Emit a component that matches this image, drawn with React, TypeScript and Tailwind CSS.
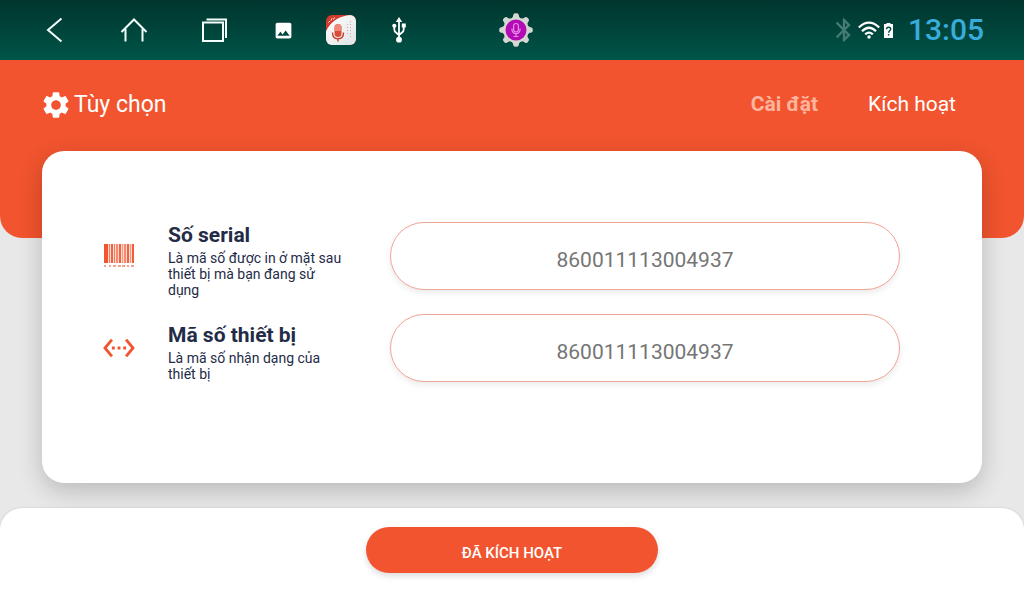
import React from "react";
import { MdBluetooth, MdImage, MdSettings, MdSettingsEthernet } from "react-icons/md";

const BARS = [
  [0, 4, 1], [5, 1, 0.7], [7, 2, 0.9], [10, 1, 0.7], [12, 2, 0.6], [15, 2, 0.9], [18, 1, 0.5],
  [20, 2, 0.6], [23, 2, 0.9], [26, 1, 0.5], [28, 2, 0.95],
];

function BarcodeIcon() {
  return (
    <svg viewBox="0 0 30 24" className="h-6 w-[30px]" fill="#f1552f" aria-hidden="true">
      <rect width="30" height="19" opacity="0.2" />
      {BARS.map(([x, w, o]) => (
        <rect key={x} x={x} y="0" width={w} height="19" opacity={o} />
      ))}
      {[[0, 2], [5, 2], [9, 3], [14, 3], [18, 3], [23, 2], [27, 3]].map(([x, w]) => (
        <rect key={x} x={x} y="21" width={w} height="2" opacity="0.55" />
      ))}
    </svg>
  );
}

function MicAppIcon() {
  return (
    <svg viewBox="0 0 30 30" className="size-[30px]" aria-hidden="true">
      <defs>
        <clipPath id="app-shape"><rect width="30" height="30" rx="6" /></clipPath>
        <linearGradient id="app-fill" x1="0" y1="0" x2="1" y2="1">
          <stop offset="0" stopColor="#ffffff" /><stop offset="1" stopColor="#dfe3e4" />
        </linearGradient>
      </defs>
      <g clipPath="url(#app-shape)">
        <rect width="30" height="30" fill="#d23a2c" />
        <path d="M0 16.500C3 10 8 4 17 1.500Q23-.5 30 0V30H0Z" fill="url(#app-fill)" />
        <path d="M2.500 7.500l1.500-1.500M5 5.500l1-2M7.500 4.500l1-2" stroke="#fff" strokeWidth="1" />
        <rect x="8.500" y="9" width="7" height="13" rx="3.500" fill="#d94a38" />
        <path d="M8.500 16v-3.500a3.500 3.500 0 0 1 7 0V16Z" fill="#ee8878" />
        <path d="M6.500 17.500c0 4 2.300 6.300 5.500 6.300s5.500-2.300 5.500-6.300M12 24v2.500" fill="none" stroke="#c8402c" strokeWidth="1.400" />
        <path d="M21.500 9v12M24.500 6v16" stroke="#dda59e" strokeWidth="1" strokeDasharray="1 2" />
      </g>
    </svg>
  );
}

function UsbIcon() {
  return (
    <svg viewBox="0 0 14 26" className="h-[26px] w-[14px]" aria-hidden="true">
      <g fill="none" stroke="#fff" strokeWidth="1.800">
        <path d="M7 3v20M2.300 9v3.500Q2.300 14.500 4 15.500L7 18M11.700 8v4.500Q11.700 14.500 10 15.500L7 18" />
      </g>
      <g fill="#fff">
        <path d="M7 0l3.200 5H3.800Z" />
        <circle cx="2.300" cy="8.800" r="2.100" />
        <rect x="9.800" y="6.500" width="4" height="4" />
        <circle cx="7" cy="22.700" r="2.900" />
      </g>
    </svg>
  );
}

function GearMicIcon() {
  return (
    <svg viewBox="-17 -17 34 34" className="size-[34px]" aria-hidden="true">
      <g fill="#d5d8d2">
        <circle r="12.800" />
        {[0, 45, 90, 135, 180, 225, 270, 315].map((a) => (
          <path key={a} d="M-4.500-11.500Q-2.800-13-2.600-15.500Q-2.500-16.800 0-16.800T2.600-15.500Q2.800-13 4.500-11.500Z" transform={`rotate(${a})`} />
        ))}
      </g>
      <circle r="10.500" fill="#b50bb5" />
      <g fill="none" stroke="#e58be8" strokeWidth="1.200">
        <rect x="-2.400" y="-6.500" width="4.800" height="8.500" rx="2.400" />
        <path d="M-4-1.500v1.200a4 4 0 0 0 8 0v-1.200M0 3.700V6.500M-2.500 6.500h5" />
      </g>
    </svg>
  );
}

function WifiIcon() {
  return (
    <svg viewBox="0 0 22 18" className="h-[18px] w-[22px]" fill="none" stroke="#fff" strokeWidth="2.300" aria-hidden="true">
      <path d="M.8 6.500Q11-3.200 21.200 6.500M4 10.200Q11 3.200 18 10.200M7.200 13.400Q11 9.800 14.800 13.400" />
      <circle cx="11" cy="16" r="1.700" fill="#fff" stroke="none" />
    </svg>
  );
}

function BatteryIcon() {
  return (
    <svg viewBox="0 0 9 15" className="h-[15px] w-[9px]" aria-hidden="true">
      <path d="M2.500 0h4v1H9V15H0V1h2.500Z" fill="#fff" />
      <path d="M2.500 6.200C2.500 3.600 6.700 3.700 6.700 6.100 6.700 7.700 4.600 7.900 4.600 9.800M4.600 11v1.500" fill="none" stroke="#004b40" strokeWidth="1.400" />
    </svg>
  );
}

const NAV = [
  { label: "Back", path: "M24.500 5.500 11 17l13.500 11.500" },
  { label: "Home", path: "M4.500 19 17 6.500 29.500 19M8.500 16v12.500M25.500 16v12.500" },
  { label: "Recent apps", path: "M6 9.500h20v18.500H6ZM9.500 6.500h19.500V25" },
];

function StatusBar() {
  return (
    <div className="flex h-[60px] items-center bg-linear-to-b from-[#00352d] to-[#005549] pr-10 pl-[14px] text-white">
      <nav className="flex">
        {NAV.map(({ label, path }) => (
          <button key={label} type="button" aria-label={label} className="flex h-[60px] w-20 items-center justify-center">
            <svg viewBox="0 0 34 34" className="size-[34px]" fill="none" stroke="#f2fffc" strokeWidth="2">
              <path d={path} />
            </svg>
          </button>
        ))}
      </nav>
      <div className="flex items-center">
        <span className="flex w-[58px] justify-center"><MdImage className="size-[21px]" /></span>
        <span className="flex w-[58px] justify-center"><MicAppIcon /></span>
        <span className="flex w-[58px] justify-center"><UsbIcon /></span>
      </div>
      <div className="ml-[71px]"><GearMicIcon /></div>
      <div className="ml-auto flex items-center">
        <MdBluetooth className="size-7 text-[#447b72]" />
        <WifiIcon />
        <span className="ml-1"><BatteryIcon /></span>
        <time className="ml-[15px] text-[30px] leading-none font-medium text-[#38addb]">13:05</time>
      </div>
    </div>
  );
}

const FIELDS = [
  {
    id: "serial",
    title: "Số serial",
    hint: "Là mã số được in ở mặt sau thiết bị mà bạn đang sử dụng",
    value: "860011113004937",
    icon: <BarcodeIcon />,
  },
  {
    id: "device",
    title: "Mã số thiết bị",
    hint: "Là mã số nhận dạng của thiết bị",
    value: "860011113004937",
    icon: <MdSettingsEthernet className="size-[34px] text-[#f1552f]" />,
  },
];

export default function App() {
  return (
    <div className="flex min-h-screen flex-col bg-[#e8e8e8] font-['Roboto',sans-serif]">
      <StatusBar />
      <header className="h-[178px] rounded-b-[22px] bg-[#f1542e] pt-[29px] pr-[68px] pl-10 text-white">
        <div className="flex items-start justify-between">
          <h1 className="flex items-center gap-0.5 text-[23px] leading-8">
            <MdSettings className="size-8" />
            Tùy chọn
          </h1>
          <nav className="flex gap-[50px] text-[21px] leading-[30px]">
            <a href="#settings" className="font-bold text-[#ffb49f]">Cài đặt</a>
            <a href="#activate">Kích hoạt</a>
          </nav>
        </div>
      </header>
      <main className="mx-[42px] -mt-[87px] mb-[25px] flex rounded-[22px] bg-white pt-[71px] pr-[82px] pb-[101px] pl-[60px] shadow-[0_8px_24px_rgba(0,0,0,0.2)]">
        <div className="flex w-[66px] flex-col gap-6">
          {FIELDS.map((f) => (
            <div key={f.id} className="flex h-[68px] w-[34px] items-center justify-center">{f.icon}</div>
          ))}
        </div>
        <div className="flex w-[176px] flex-col gap-6 text-[#242b47]">
          {FIELDS.map((f) => (
            <div key={f.id}>
              <label htmlFor={f.id} className="mb-0.5 block text-[21px] leading-[26px] font-bold">{f.title}</label>
              <p id={`${f.id}-hint`} className="text-[14px] leading-4">{f.hint}</p>
            </div>
          ))}
        </div>
        <div className="ml-[46px] flex min-w-0 flex-1 flex-col gap-6">
          {FIELDS.map((f) => (
            <input
              key={f.id}
              id={f.id}
              aria-describedby={`${f.id}-hint`}
              readOnly
              value={f.value}
              className="h-[68px] w-full rounded-full border border-[#f3a595] bg-white pt-2 text-center text-[21px] text-[#757575] shadow-[0_3px_6px_rgba(0,0,0,0.08)] outline-none"
            />
          ))}
        </div>
      </main>
      <footer className="flex flex-1 items-start justify-center rounded-t-[22px] bg-white px-6 pt-[19px] pb-[27px] shadow-[0_0_3px_rgba(0,0,0,0.12)]">
        <button
          type="button"
          className="h-[46px] w-[292px] rounded-full bg-[#f1542e] pt-1.5 text-[15px] font-medium text-white shadow-[0_3px_6px_rgba(0,0,0,0.14)]"
        >
          ĐÃ KÍCH HOẠT
        </button>
      </footer>
    </div>
  );
}
